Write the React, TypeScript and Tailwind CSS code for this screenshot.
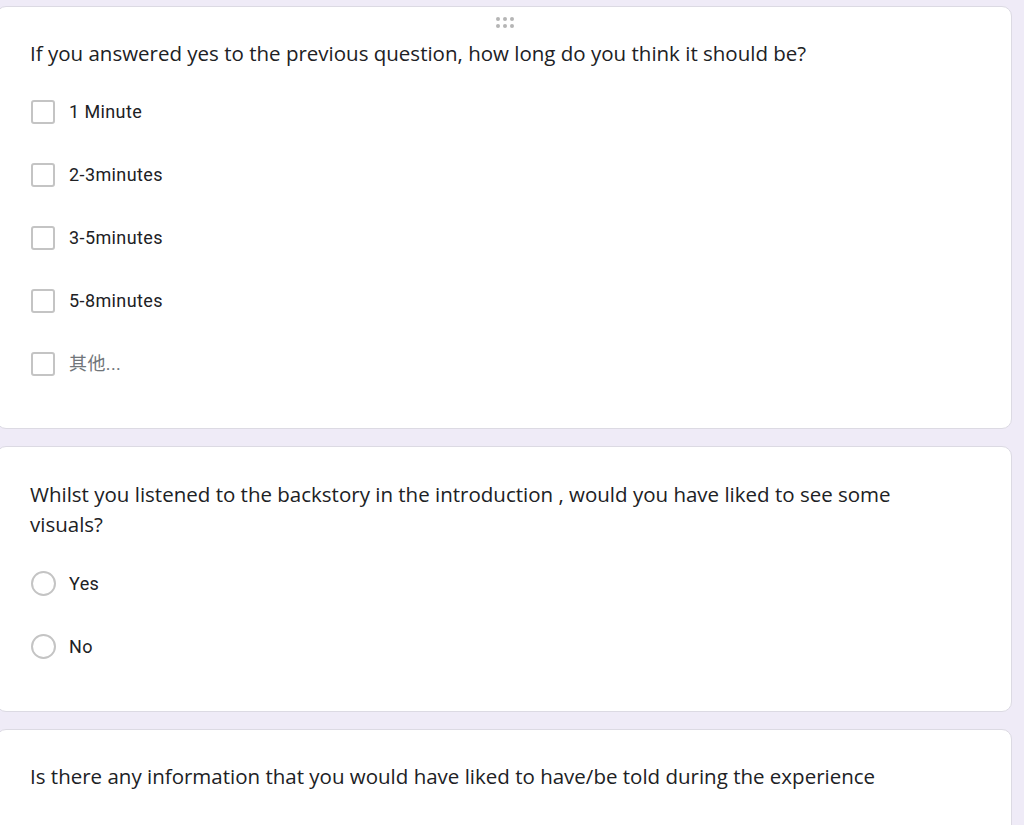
import React from "react";

function Check({ label, muted }: { label: string; muted?: boolean }) {
  return (
    <div className="flex items-center h-[63px]">
      <div className="w-[24px] h-[24px] rounded-[3px] border-2 border-[#c4c4c4] bg-white shrink-0" />
      <span
        className={`ml-[14px] text-[18px] tracking-[0.4px] ${muted ? "text-[#70757a]" : "text-[#202124]"}`}
      >
        {label}
      </span>
    </div>
  );
}

function Radio({ label }: { label: string }) {
  return (
    <div className="flex items-center h-[63px]">
      <div className="w-[25px] h-[25px] rounded-full border-2 border-[#c4c4c4] bg-white shrink-0" />
      <span className="ml-[13px] text-[18px] tracking-[0.4px] text-[#202124]">{label}</span>
    </div>
  );
}

const qFont = { fontFamily: "'Open Sans', Roboto, sans-serif" };

export default function App() {
  return (
    <div
      className="min-h-[825px] bg-[#efebf7] pt-[6px] pr-[12px] -ml-[4px] flex flex-col gap-[17px] overflow-hidden"
      style={{ fontFamily: "Roboto, 'Noto Sans CJK SC', sans-serif" }}
    >
      {/* question 1 */}
      <div className="bg-white rounded-[10px] border border-[#dcdae3] h-[423px] pl-[33px] relative">
        <div className="absolute top-[10px] left-1/2 -translate-x-[8px] grid grid-cols-3 gap-[3px]">
          {Array.from({ length: 6 }).map((_, i) => (
            <span key={i} className="w-[4px] h-[4px] rounded-full bg-[#b5b5b5]" />
          ))}
        </div>
        <p className="pt-[31px] text-[20.5px] leading-[30px] text-[#202124]" style={qFont}>
          If you answered yes to the previous question, how long do you think it should be?
        </p>
        <div className="mt-[12px] pl-[1px]">
          <Check label="1 Minute" />
          <Check label="2-3minutes" />
          <Check label="3-5minutes" />
          <Check label="5-8minutes" />
          <Check label="其他..." muted />
        </div>
      </div>

      {/* question 2 */}
      <div className="bg-white rounded-[10px] border border-[#dcdae3] h-[266px] pl-[33px]">
        <p className="pt-[32px] text-[20.5px] leading-[30px] text-[#202124] max-w-[900px]" style={qFont}>
          Whilst you listened to the backstory in the introduction , would you have liked to see some visuals?
        </p>
        <div className="mt-[13px] pl-[1px]">
          <Radio label="Yes" />
          <Radio label="No" />
        </div>
      </div>

      {/* question 3 */}
      <div className="bg-white rounded-[10px] border border-[#dcdae3] h-[200px] pl-[33px]">
        <p className="pt-[31px] text-[20.5px] leading-[30px] text-[#202124]" style={qFont}>
          Is there any information that you would have liked to have/be told during the experience
        </p>
      </div>
    </div>
  );
}
